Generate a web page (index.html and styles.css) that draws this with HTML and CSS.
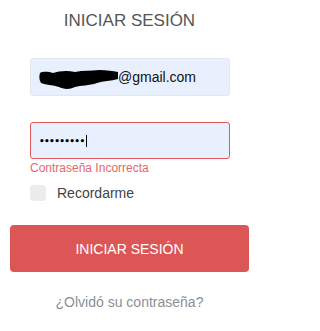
FILE: index.html
```html
<!DOCTYPE html>
<html lang="es">
<head>
<meta charset="utf-8">
<link rel="stylesheet" href="styles.css">
</head>
<body>
<form class="login">
  <h1 class="title">INICIAR SESIÓN</h1>
  <div class="field email">
    <svg class="blob" width="80" height="20" viewBox="0 0 80 20"><path d="M1 3 C5 1 10 2 14 3 C20 1 28 0 36 2 C44 0 52 1 60 0 C68 0 74 1 79 2 L79 9 C72 11 64 11 58 13 C50 16 42 15 36 17 C30 20 24 19 20 17 C14 15 7 15 2 13 C0 10 0 6 1 3 Z" fill="#000"/></svg><span class="email-text">@gmail.com</span>
  </div>
  <div class="field password">
    <span class="dots">•••••••••</span><span class="caret"></span>
  </div>
  <div class="error">Contraseña Incorrecta</div>
  <label class="remember"><span class="check"></span><span>Recordarme</span></label>
  <button type="button" class="submit">INICIAR SESIÓN</button>
  <a class="forgot">¿Olvidó su contraseña?</a>
</form>
</body>
</html>
```

FILE: styles.css
```css
html, body {
  margin: 0;
  background: #fff;
}
body {
  font-family: "Liberation Sans", Arial, sans-serif;
}
.login {
  width: 239px;
  margin-left: 10px;
  display: flex;
  flex-direction: column;
  padding-top: 11px;
}
.title {
  margin: 0;
  font-size: 17px;
  font-weight: normal;
  color: #555;
  text-align: center;
  line-height: 20px;
}
.field {
  box-sizing: border-box;
  width: 200px;
  height: 38px;
  margin-left: 20px;
  background: #e8f0fe;
  border: 1px solid #e3e6ea;
  border-radius: 3px;
  display: flex;
  align-items: center;
  padding-left: 8px;
  font-size: 14px;
  color: #111;
}
.email {
  margin-top: 27px;
}
.blob {
  display: block;
  margin-top: 5px;
}
.email-text {
  margin-left: -1px;
}
.password {
  margin-top: 26px;
  border-color: #e05a5a;
  height: 37px;
}
.dots {
  font-family: "DejaVu Sans", sans-serif;
  font-size: 9px;
  font-weight: bold;
  letter-spacing: -0.7px;
  color: #000;
  margin-top: 1px;
}
.caret {
  display: inline-block;
  width: 1px;
  height: 12px;
  background: #000;
  margin-left: 2px;
}
.error {
  margin-left: 20px;
  margin-top: 2px;
  font-size: 12px;
  line-height: 14px;
  color: #e06a6a;
}
.remember {
  margin-left: 20px;
  margin-top: 10px;
  display: flex;
  align-items: center;
  font-size: 14px;
  color: #444;
}
.check {
  width: 16px;
  height: 16px;
  border-radius: 3px;
  background: #ececec;
  margin-right: 11px;
}
.submit {
  margin-top: 24px;
  height: 47px;
  border: none;
  border-radius: 4px;
  background: #dc5656;
  color: #fff;
  font-family: "Liberation Sans", Arial, sans-serif;
  font-size: 14px;
  padding: 0;
}
.forgot {
  margin-top: 22px;
  text-align: center;
  font-size: 14px;
  color: #8a8f98;
  line-height: 16px;
}
```
